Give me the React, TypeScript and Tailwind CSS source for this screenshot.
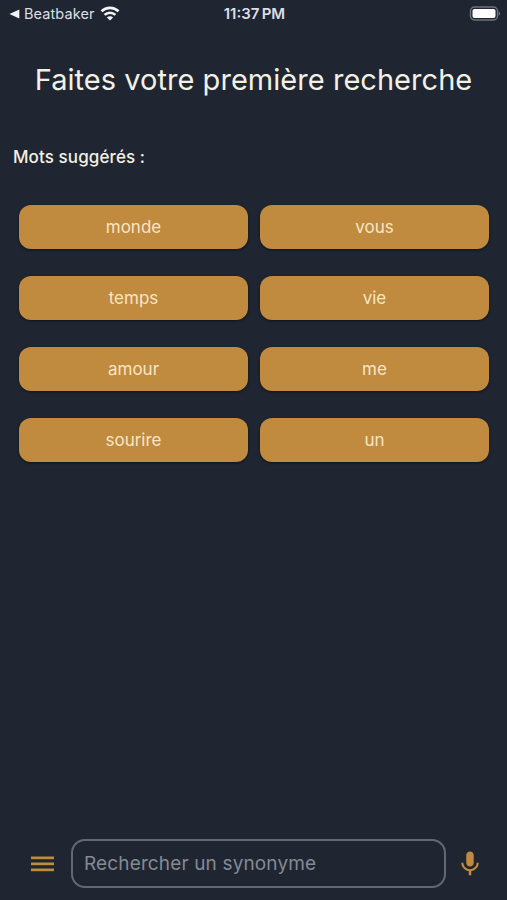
import { useState } from "react";
import { MdMic } from "react-icons/md";

const suggestedWords = ["monde", "vous", "temps", "vie", "amour", "me", "sourire", "un"];

const WifiIcon = () => (
  <svg width="20" height="15" viewBox="0 0 20 15" fill="none" stroke="#f4f5f7" strokeWidth="2.7">
    <path d="M1.5 5.3a12.2 12.2 0 0 1 17 0" />
    <path d="M4.6 8.9a7.8 7.8 0 0 1 10.8 0" />
    <path d="M10 14.6 6.9 11.5a4.4 4.4 0 0 1 6.2 0z" fill="#f4f5f7" stroke="none" />
  </svg>
);

const BatteryIcon = () => (
  <svg width="32" height="15" viewBox="0 0 32 15" fill="none">
    <rect x="1.5" y="1" width="27" height="13" rx="4" stroke="#6d727c" strokeWidth="1.4" />
    <rect x="3.5" y="3" width="23" height="9" rx="2" fill="#ffffff" />
    <path d="M29.6 5.2v4.6a2.5 2.5 0 0 0 0-4.6z" fill="#6d727c" />
  </svg>
);

const MenuIcon = () => (
  <svg className="shrink-0" width="30" height="30" viewBox="0 0 30 30" fill="#c08a3f">
    <rect x="4" y="7.5" width="23" height="2.7" />
    <rect x="4" y="13.5" width="23" height="2.7" />
    <rect x="4" y="19.5" width="23" height="2.7" />
  </svg>
);

const StatusBar = () => (
  <div className="grid h-[27px] grid-cols-3 items-center pl-[9px] pr-[6px] text-[#dcdfe4]">
    <div className="flex items-center">
      <svg className="mr-1" width="11" height="10" viewBox="0 0 11 10">
        <path d="M0.5 5 10.3 0.5v9z" fill="#f4f5f7" />
      </svg>
      <span className="pt-px text-[14.5px] leading-none tracking-[0.1px]">Beatbaker</span>
      <span className="ml-[5px]">
        <WifiIcon />
      </span>
    </div>
    <span className="pr-px text-center text-[15px] font-semibold leading-none [word-spacing:-1.5px]">11:37 PM</span>
    <div className="flex justify-end">
      <BatteryIcon />
    </div>
  </div>
);

export default function App() {
  const [search, setSearch] = useState("");

  return (
    <div className="flex h-screen flex-col bg-[#1f2632] font-['Inter',sans-serif] text-[#f3f1e4]">
      <StatusBar />
      <h1 className="mt-[32px] whitespace-nowrap text-center text-[29px] leading-[42px] tracking-[0.04px]">
        Faites votre première recherche
      </h1>
      <p className="ml-[13px] mt-[44px] text-[17px] font-medium leading-6 tracking-[0.1px]">Mots suggérés :</p>
      <div className="mt-[36px] grid grid-cols-2 gap-x-3 gap-y-[27px] pl-[19px] pr-[18px]">
        {suggestedWords.map((word) => (
          <button
            key={word}
            onClick={() => setSearch(word)}
            className="h-[44px] cursor-pointer rounded-xl bg-[#c08a3f] pt-0.5 text-[17px] text-[#f8e5c5] shadow-[0_1px_3px_rgba(0,0,0,0.5)]"
          >
            {word}
          </button>
        ))}
      </div>
      <div className="mb-3 mt-auto flex items-center pl-[27px] pr-[22px]">
        <MenuIcon />
        <input
          className="ml-[14px] h-[49px] min-w-0 flex-1 rounded-[14px] border-2 border-[#636973] bg-transparent px-[11px] text-[19px] tracking-[0.14px] outline-none placeholder:text-[#858a94]"
          type="text"
          name="search"
          placeholder="Rechercher un synonyme"
          value={search}
          onChange={(e) => setSearch(e.target.value)}
        />
        <MdMic className="ml-[9px] shrink-0 text-[#c08a3f]" size={30} />
      </div>
    </div>
  );
}
